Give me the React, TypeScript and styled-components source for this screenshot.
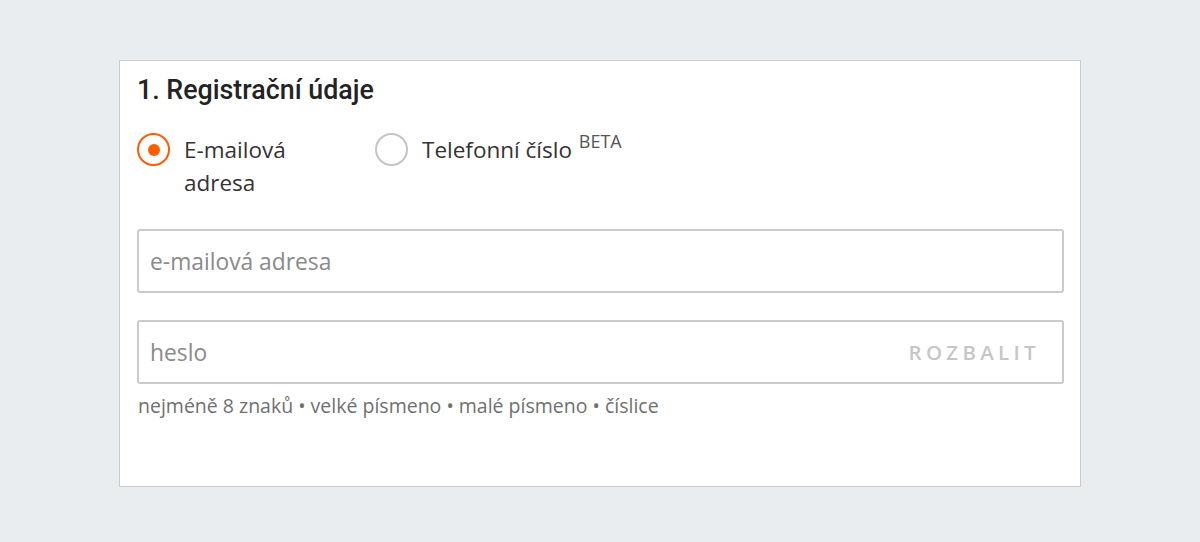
import styled, { createGlobalStyle } from 'styled-components';

const GlobalStyle = createGlobalStyle`
	html, body {
		margin: 0;
		padding: 0;
		background: #eaedf0;
	}
	body {
		font-family: 'Open Sans', 'Liberation Sans', sans-serif;
	}
`;

const App = () => {
	return (
		<>
			<GlobalStyle />
			<Page>
				<Card>
					<Title>1. Registrační údaje</Title>
					<Options>
						<Option width="238px">
							<Radio checked />
							<Label narrow>E-mailová adresa</Label>
						</Option>
						<Option>
							<Radio />
							<Label>
								Telefonní číslo <Sup>BETA</Sup>
							</Label>
						</Option>
					</Options>
					<Field>
						<Placeholder>e-mailová adresa</Placeholder>
					</Field>
					<Field spaced>
						<Placeholder>heslo</Placeholder>
						<Toggle>ROZBALIT</Toggle>
					</Field>
					<Hint>nejméně 8 znaků • velké písmeno • malé písmeno • číslice</Hint>
				</Card>
			</Page>
		</>
	);
};

export default App;

const Page = styled.div`
	height: 542px;
	padding-top: 60px;
	box-sizing: border-box;
	display: flex;
	justify-content: center;
	align-items: flex-start;
`;

const Card = styled.div`
	width: 962px;
	height: 427px;
	box-sizing: border-box;
	background: #fff;
	border: 1px solid #c9cbcd;
	padding: 13px 16px 0 17px;
	display: flex;
	flex-direction: column;
`;

const Title = styled.h2`
	margin: 0;
	font-family: Roboto, 'Liberation Sans', sans-serif;
	font-weight: 500;
	font-size: 26.8px;
	line-height: 32px;
	color: #232323;
`;

const Options = styled.div`
	display: flex;
	margin-top: 27px;
`;

const Option = styled.div<{ width?: string }>`
	display: flex;
	align-items: flex-start;
	width: ${(p) => p.width || 'auto'};
	gap: 14px;
`;

const Radio = styled.span<{ checked?: boolean }>`
	flex: none;
	width: 33px;
	height: 33px;
	box-sizing: border-box;
	border-radius: 50%;
	border: 2px solid ${(p) => (p.checked ? '#ff5c00' : '#c4c4c4')};
	display: flex;
	align-items: center;
	justify-content: center;
	&::after {
		content: '';
		display: ${(p) => (p.checked ? 'block' : 'none')};
		width: 12px;
		height: 12px;
		border-radius: 50%;
		background: #ff5c00;
	}
`;

const Label = styled.span<{ narrow?: boolean }>`
	font-size: 22.5px;
	line-height: 33px;
	color: #333;
	max-width: ${(p) => (p.narrow ? '150px' : 'none')};
`;

const Sup = styled.sup`
	font-size: 18px;
	vertical-align: top;
	position: relative;
	top: -1px;
	margin-left: 1px;
	color: #555;
	line-height: 1;
`;

const Field = styled.div<{ spaced?: boolean }>`
	margin-top: ${(p) => (p.spaced ? '27px' : '30px')};
	height: 64px;
	flex: none;
	box-sizing: border-box;
	border: 2px solid #cbcbcb;
	border-radius: 3px;
	padding: 0 26px 0 11px;
	display: flex;
	align-items: center;
	justify-content: space-between;
`;

const Placeholder = styled.span`
	font-size: 22.8px;
	color: #8a8a8a;
`;

const Toggle = styled.span`
	font-size: 20.5px;
	font-weight: 600;
	letter-spacing: 4.3px;
	margin-right: -4px;
	color: #c6c6c6;
`;

const Hint = styled.p`
	margin: 9px 0 0 1px;
	font-size: 19.5px;
	line-height: 26px;
	color: #6f6f6f;
`;
